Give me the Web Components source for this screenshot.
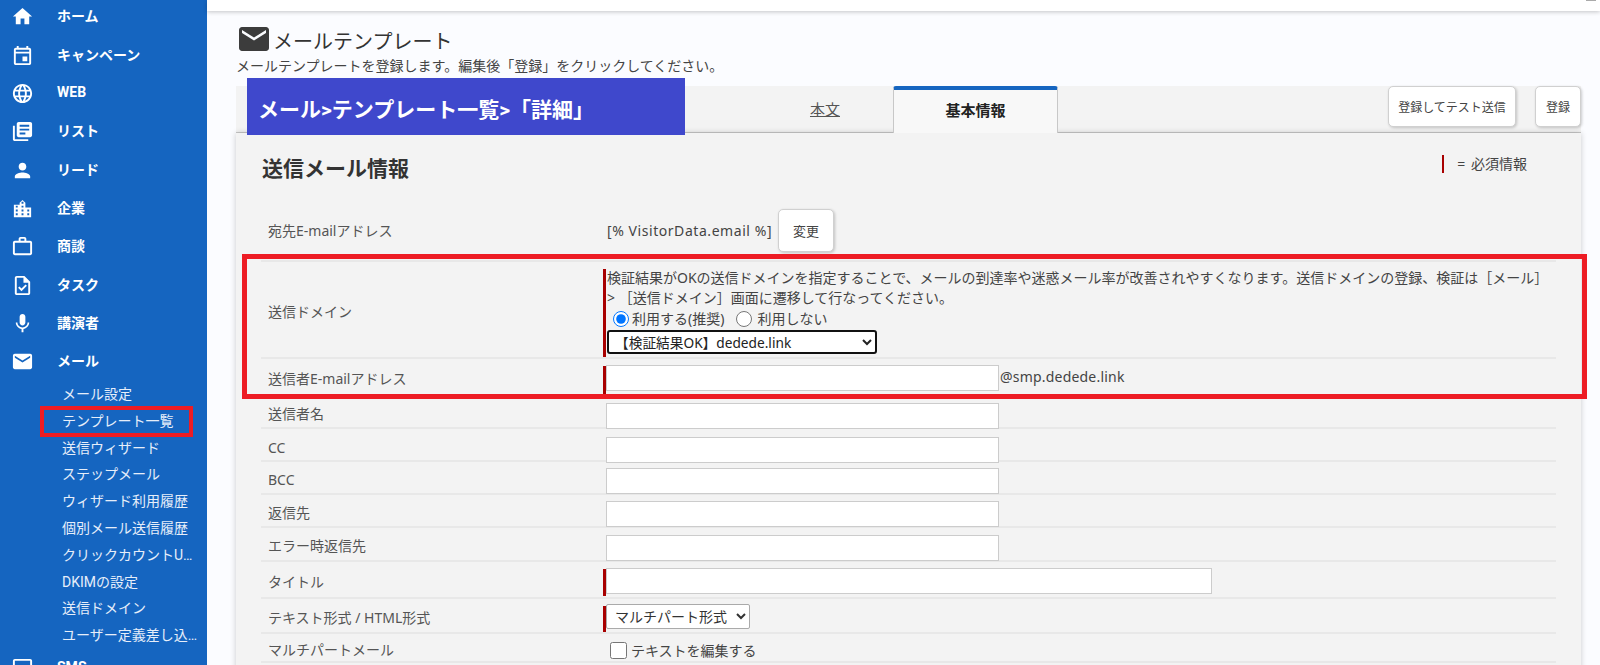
<!DOCTYPE html>
<html lang="ja"><head><meta charset="utf-8"><title>メールテンプレート</title>
<style>
html,body{margin:0;height:665px;overflow:hidden;background:#fbfcff}
body{font-family:Roboto,"Noto Sans CJK JP",sans-serif;font-size:14px;color:#444}
</style></head><body>
<app-shell>
  <side-nav slot="nav">
    <nav-item icon="home">ホーム</nav-item>
    <nav-item icon="event">キャンペーン</nav-item>
    <nav-item icon="language">WEB</nav-item>
    <nav-item icon="books">リスト</nav-item>
    <nav-item icon="person">リード</nav-item>
    <nav-item icon="city">企業</nav-item>
    <nav-item icon="work">商談</nav-item>
    <nav-item icon="task">タスク</nav-item>
    <nav-item icon="mic">講演者</nav-item>
    <nav-item icon="email">メール</nav-item>
    <sub-item>メール設定</sub-item>
    <sub-item marked>テンプレート一覧</sub-item>
    <sub-item>送信ウィザード</sub-item>
    <sub-item>ステップメール</sub-item>
    <sub-item>ウィザード利用履歴</sub-item>
    <sub-item>個別メール送信履歴</sub-item>
    <sub-item>クリックカウントU…</sub-item>
    <sub-item>DKIMの設定</sub-item>
    <sub-item>送信ドメイン</sub-item>
    <sub-item>ユーザー定義差し込…</sub-item>
    <nav-item icon="sms">SMS</nav-item>
  </side-nav>
  <top-bar slot="top"></top-bar>
  <page-head title-text="メールテンプレート">メールテンプレートを登録します。編集後「登録」をクリックしてください。</page-head>
  <tab-bar crumb="メール&gt;テンプレート一覧&gt;「詳細」">
    <tab-link slot="tabs" style="--w:136px">本文</tab-link>
    <tab-link slot="tabs" style="--w:165px" active>基本情報</tab-link>
    <action-btn slot="actions" style="--w:128px">登録してテスト送信</action-btn>
    <action-btn slot="actions" style="--w:46px">登録</action-btn>
  </tab-bar>
  <form-card heading="送信メール情報">
    <form-row label="宛先E-mailアドレス" style="--h:57px;--t:4px;--vh:43px;--lb:8px">
      <flow-line style="--gap:6px;--ls:.56px">[% VisitorData.email %]<action-btn style="--w:56px;--hh:43px;--fs:13px">変更</action-btn></flow-line>
    </form-row>
    <form-row label="送信ドメイン" required style="--h:97px;--t:7px;--vh:88px">
      <domain-field></domain-field>
    </form-row>
    <form-row label="送信者E-mailアドレス" required style="--h:37px;--t:7px;--vh:28px">
      <flow-line style="--gap:1px;--pl:0;--ai:flex-start;--lh:22px;--ls:.2px"><text-field style="--w:393px;--mt:-1px"></text-field>@smp.dedede.link</flow-line>
    </form-row>
    <form-row label="送信者名" style="--h:33px;--t:7px;--vh:25px"><text-field style="--w:393px"></text-field></form-row>
    <form-row label="CC" style="--h:33px;--t:8px;--vh:25px"><text-field style="--w:393px"></text-field></form-row>
    <form-row label="BCC" style="--h:33px;--t:6px;--vh:25px"><text-field style="--w:393px"></text-field></form-row>
    <form-row label="返信先" style="--h:33px;--t:6px;--vh:25px"><text-field style="--w:393px"></text-field></form-row>
    <form-row label="エラー時返信先" style="--h:34px;--t:7px;--vh:25px"><text-field style="--w:393px"></text-field></form-row>
    <form-row label="タイトル" required style="--h:37px;--t:7px;--vh:27px"><text-field style="--w:606px;--mt:-1px"></text-field></form-row>
    <form-row label="テキスト形式 / HTML形式" required style="--h:35px;--t:7px;--vh:26px"><part-select></part-select></form-row>
    <form-row label="マルチパートメール" style="--h:29px;--t:6px;--vh:20px"><check-field>テキストを編集する</check-field></form-row>
  </form-card>
</app-shell>
<script>
const ICONS={
home:'M10 20v-6h4v6h5v-8h3L12 3 2 12h3v8z',
event:'M19 4h-1V2h-2v2H8V2H6v2H5c-1.11 0-1.99.9-1.99 2L3 20c0 1.1.89 2 2 2h14c1.1 0 2-.9 2-2V6c0-1.1-.9-2-2-2zm0 16H5V10h14v10zm0-12H5V6h14v2zm-2 5h-5v5h5v-5z',
language:'M11.99 2C6.47 2 2 6.48 2 12s4.47 10 9.99 10C17.52 22 22 17.52 22 12S17.52 2 11.99 2zm6.93 6h-2.95c-.32-1.25-.78-2.45-1.38-3.56 1.84.63 3.37 1.91 4.33 3.56zM12 4.04c.83 1.2 1.48 2.53 1.91 3.96h-3.82c.43-1.43 1.08-2.76 1.91-3.96zM4.26 14C4.1 13.36 4 12.69 4 12s.1-1.36.26-2h3.38c-.08.66-.14 1.32-.14 2 0 .68.06 1.34.14 2H4.26zm.82 2h2.95c.32 1.25.78 2.45 1.38 3.56-1.84-.63-3.37-1.9-4.33-3.56zm2.95-8H5.08c.96-1.66 2.49-2.93 4.33-3.56C8.81 5.55 8.35 6.75 8.03 8zM12 19.96c-.83-1.2-1.48-2.53-1.91-3.96h3.82c-.43 1.43-1.08 2.76-1.91 3.96zM14.34 14H9.66c-.09-.66-.16-1.32-.16-2 0-.68.07-1.35.16-2h4.68c.09.65.16 1.32.16 2 0 .68-.07 1.34-.16 2zm.25 5.56c.6-1.11 1.06-2.31 1.38-3.56h2.95c-.96 1.65-2.49 2.93-4.33 3.56zM16.36 14c.08-.66.14-1.32.14-2 0-.68-.06-1.34-.14-2h3.38c.16.64.26 1.31.26 2s-.1 1.36-.26 2h-3.38z',
books:'M4 6H2v14c0 1.1.9 2 2 2h14v-2H4V6zm16-4H8c-1.1 0-2 .9-2 2v12c0 1.1.9 2 2 2h12c1.1 0 2-.9 2-2V4c0-1.1-.9-2-2-2zm-1 9H9V9h10v2zm-4 4H9v-2h6v2zm4-8H9V5h10v2z',
person:'M12 12c2.21 0 4-1.79 4-4s-1.79-4-4-4-4 1.79-4 4 1.79 4 4 4zm0 2c-2.67 0-8 1.34-8 4v2h16v-2c0-2.66-5.33-4-8-4z',
city:'M15 11V6l-3-3-3 3v2H3v13h18V11h-6zM7 19H5v-2h2v2zm0-4H5v-2h2v2zm0-4H5V9h2v2zm6 8h-2v-2h2v2zm0-4h-2v-2h2v2zm0-4h-2V9h2v2zm0-4h-2V5h2v2zm6 12h-2v-2h2v2zm0-4h-2v-2h2v2z',
work:'M14 6V4h-4v2h4zM4 8v11h16V8H4zm16-2c1.11 0 2 .89 2 2v11c0 1.11-.89 2-2 2H4c-1.11 0-2-.89-2-2l.01-11c0-1.11.88-2 1.99-2h4V4c0-1.11.89-2 2-2h4c1.11 0 2 .89 2 2v2h4z',
task:'M14 2H6c-1.1 0-1.99.9-1.99 2L4 20c0 1.1.89 2 1.99 2H18c1.1 0 2-.9 2-2V8l-6-6zm4 18H6V4h7v5h5v11zm-9.18-6.95L7.4 14.46 10.94 18l5.66-5.66-1.41-1.41-4.24 4.24-2.13-2.12z',
mic:'M12 14c1.66 0 2.99-1.34 2.99-3L15 5c0-1.66-1.34-3-3-3S9 3.34 9 5v6c0 1.66 1.34 3 3 3zm5.3-3c0 3-2.54 5.1-5.3 5.1S6.7 14 6.7 11H5c0 3.41 2.72 6.23 6 6.72V21h2v-3.28c3.28-.48 6-3.3 6-6.72h-1.7z',
email:'M20 4H4c-1.1 0-1.99.9-1.99 2L2 18c0 1.1.9 2 2 2h16c1.1 0 2-.9 2-2V6c0-1.1-.9-2-2-2zm0 4l-8 5-8-5V6l8 5 8-5v2z',
sms:'M20 2H4c-1.1 0-1.99.9-1.99 2L2 22l4-4h14c1.1 0 2-.9 2-2V4c0-1.1-.9-2-2-2zm0 14H5.17L4 17.17V4h16v12z'
};
const FORMFONT='"Noto Sans","Noto Sans CJK JP",sans-serif';
function def(name,render){
  customElements.define(name,class extends HTMLElement{
    connectedCallback(){
      if(this.shadowRoot)return;
      this.attachShadow({mode:'open'}).innerHTML=render(this);
    }
  });
}
def('app-shell',()=>`<style>
:host{display:flex;height:665px;overflow:hidden}
.main{flex:1;min-width:0;display:flex;flex-direction:column}
.content{padding:0 19px 0 29px}
</style>
<slot name="nav"></slot>
<div class="main"><slot name="top"></slot><div class="content"><slot></slot></div></div>`);
def('side-nav',()=>`<style>
:host{display:block;flex:0 0 207px;width:207px;height:665px;background:#1565c0;color:#fff;overflow:hidden;box-sizing:border-box}
.list{margin-top:-2.2px}
</style><div class="list"><slot></slot></div>`);
def('nav-item',h=>`<style>
:host{display:flex;align-items:center;height:38.33px;padding-left:11px;gap:23px;font-weight:700;font-size:14px;color:#fff}
svg{width:23px;height:23px;fill:#fff;flex:none}
span{padding-bottom:3px}
</style><svg viewBox="0 0 24 24" aria-hidden="true"><path d="${ICONS[h.getAttribute('icon')]}"/></svg><span><slot></slot></span>`);
def('sub-item',h=>`<style>
:host{display:flex;align-items:center;height:26.8px;box-sizing:border-box;padding:0 0 3px 62px;font-size:14px;color:#e6eefa;position:relative;white-space:nowrap}
.mark{position:absolute;left:40px;top:-2px;width:153px;height:31px;border:4px solid #ed1c24;box-sizing:border-box}
</style><slot></slot>${h.hasAttribute('marked')?'<div class="mark"></div>':''}`);
def('top-bar',()=>`<style>
:host{display:flex;justify-content:flex-end;height:11px;background:#fff;box-shadow:0 1px 4px rgba(0,0,0,.22);position:relative;flex:none}
i{display:block;height:1px;background:#aaa;width:5px}
i:first-child{margin-right:288px}
i:last-child{margin-right:4px}
</style><i></i><i></i>`);
def('page-head',h=>`<style>
:host{display:block;padding-top:16px;height:75px;box-sizing:border-box}
.t{display:flex;align-items:center;gap:4px;height:24px;padding-left:3px;font-size:20px;color:#333;line-height:24px}
.t span{padding-top:5px}
svg{width:30px;height:24px;fill:#3c3c3c;flex:none}
.d{margin-top:5px;font-size:14px;line-height:20px;color:#444;white-space:nowrap}
</style><div class="t"><svg viewBox="2 4 20 16" preserveAspectRatio="none" aria-hidden="true"><path d="${ICONS.email}"/></svg><span>${h.getAttribute('title-text')}</span></div><div class="d"><slot></slot></div>`);
def('tab-bar',h=>`<style>
:host{display:flex;height:47px;box-sizing:border-box;background:#f3f3f3;border-bottom:1px solid #c8c8c8;position:relative}
.crumb{position:absolute;left:11px;top:-8px;width:438px;height:57px;background:#3f48cc;color:#fff;font-weight:700;font-size:21px;display:flex;align-items:center;padding-left:11px;box-sizing:border-box;padding-top:2px;z-index:2;white-space:nowrap}
.tabs{display:flex;margin-left:521px}
.actions{display:flex;gap:19px;margin-left:auto}
</style><div class="crumb">${h.getAttribute('crumb')}</div><div class="tabs"><slot name="tabs"></slot></div><div class="actions"><slot name="actions"></slot></div>`);
def('tab-link',h=>{const a=h.hasAttribute('active');return `<style>
:host{display:flex;align-items:center;justify-content:center;width:var(--w);box-sizing:border-box;height:${a?47:46}px;
${a?'background:#f8f8f8;border:1px solid #c8c8c8;border-width:4px 1px 0;border-top-color:#1565c0;border-radius:3px 3px 0 0;font-weight:700;color:#222;font-size:15px;z-index:1;padding-bottom:5px':'color:#555;text-decoration:underline;font-size:15px;padding-bottom:2px'}}
</style><slot></slot>`});
def('action-btn',()=>`<style>
:host{display:flex;align-items:center;justify-content:center;flex:none;width:var(--w);height:var(--hh,41px);box-sizing:border-box;background:#fff;border:1px solid #d0d0d0;border-radius:5px;box-shadow:1px 1px 3px rgba(0,0,0,.2);font-size:var(--fs,12px);letter-spacing:0;color:#444;white-space:nowrap}
</style><slot></slot>`);
def('form-card',h=>`<style>
:host{display:block;position:relative;background:#f3f3f3;box-shadow:0 0 6px rgba(0,0,0,.2);padding:0 25px;height:600px;font-family:${FORMFONT}}
.head{display:flex;justify-content:space-between;height:72px;box-sizing:border-box}
h2{margin:20px 0 0 1px;font-size:21px;line-height:30px;font-weight:700;color:#333}
.legend{margin:22px 29px 0 0;height:18px;line-height:18px;border-left:2px solid #a80000;padding-left:13px;font-size:14px;word-spacing:2px;color:#444;white-space:nowrap}
.mark{position:absolute;left:6px;top:121px;width:1345px;height:145px;border:5px solid #ed1c24;box-sizing:border-box;pointer-events:none}
</style><div class="head"><h2>${h.getAttribute('heading')}</h2><div class="legend">= 必須情報</div></div><slot></slot><div class="mark"></div>`);
def('form-row',h=>`<style>
:host{display:grid;grid-template-columns:342px 1fr;height:var(--h);box-sizing:border-box;border-bottom:2px solid #e8e8e8;color:#444}
.l{align-self:center;padding:4px 0 var(--lb,0) 7px;color:#555;font-size:14px;line-height:20px;box-sizing:border-box}
.v{margin-top:var(--t);height:var(--vh);box-sizing:border-box;border-left:3px solid ${h.hasAttribute('required')?'#a80000':'transparent'}}
</style><div class="l">${h.getAttribute('label')}</div><div class="v"><slot></slot></div>`);
def('flow-line',()=>`<style>
:host{display:flex;align-items:var(--ai,center);gap:var(--gap,4px);padding-left:var(--pl,1px);height:100%;line-height:var(--lh,normal);font-size:14px;letter-spacing:var(--ls,0);color:#444;white-space:nowrap}
</style><slot></slot>`);
def('text-field',()=>`<style>
:host{display:block;width:var(--w);margin-top:var(--mt,0);flex:none}
input{display:block;width:100%;height:26px;box-sizing:border-box;background:#fff;border:1px solid #ccc;padding:0 4px;margin:0;outline:none}
</style><input type="text">`);
def('domain-field',()=>`<style>
:host{display:block;padding-left:1px;font-size:14px;line-height:20px;color:#444;white-space:nowrap;margin-top:-1px}
.r{display:flex;align-items:center;height:21px;font-size:14px}
.r input{width:16px;height:16px;margin:0 3px 0 6px}
.r input+span+input{margin:0 5px 0 12px}
select{display:block;margin-top:1px;width:270px;height:24px;box-sizing:border-box;background:#fff;border:2px solid #111;border-radius:3px;font:13.7px ${FORMFONT};color:#222;padding-left:2px}
</style>
<div>検証結果がOKの送信ドメインを指定することで、メールの到達率や迷惑メール率が改善されやすくなります。送信ドメインの登録、検証は［メール］</div>
<div>&gt; ［送信ドメイン］画面に遷移して行なってください。</div>
<div class="r"><input type="radio" name="d" checked><span>利用する(推奨)</span><input type="radio" name="d"><span>利用しない</span></div>
<select><option>【検証結果OK】dedede.link</option></select>`);
def('part-select',()=>`<style>
:host{display:block;margin-top:-2px}
select{display:block;width:144px;height:25px;box-sizing:border-box;background:#fff;border:1px solid #aaa;border-radius:2px;font:14px ${FORMFONT};color:#333;padding-left:4px}
</style><select><option>マルチパート形式</option></select>`);
def('check-field',()=>`<style>
:host{display:flex;align-items:center;height:100%;font-size:14px;color:#444;white-space:nowrap}
input{width:17px;height:17px;margin:0 4px 0 4px}
</style><input type="checkbox"><slot></slot>`);
</script>
</body></html>
